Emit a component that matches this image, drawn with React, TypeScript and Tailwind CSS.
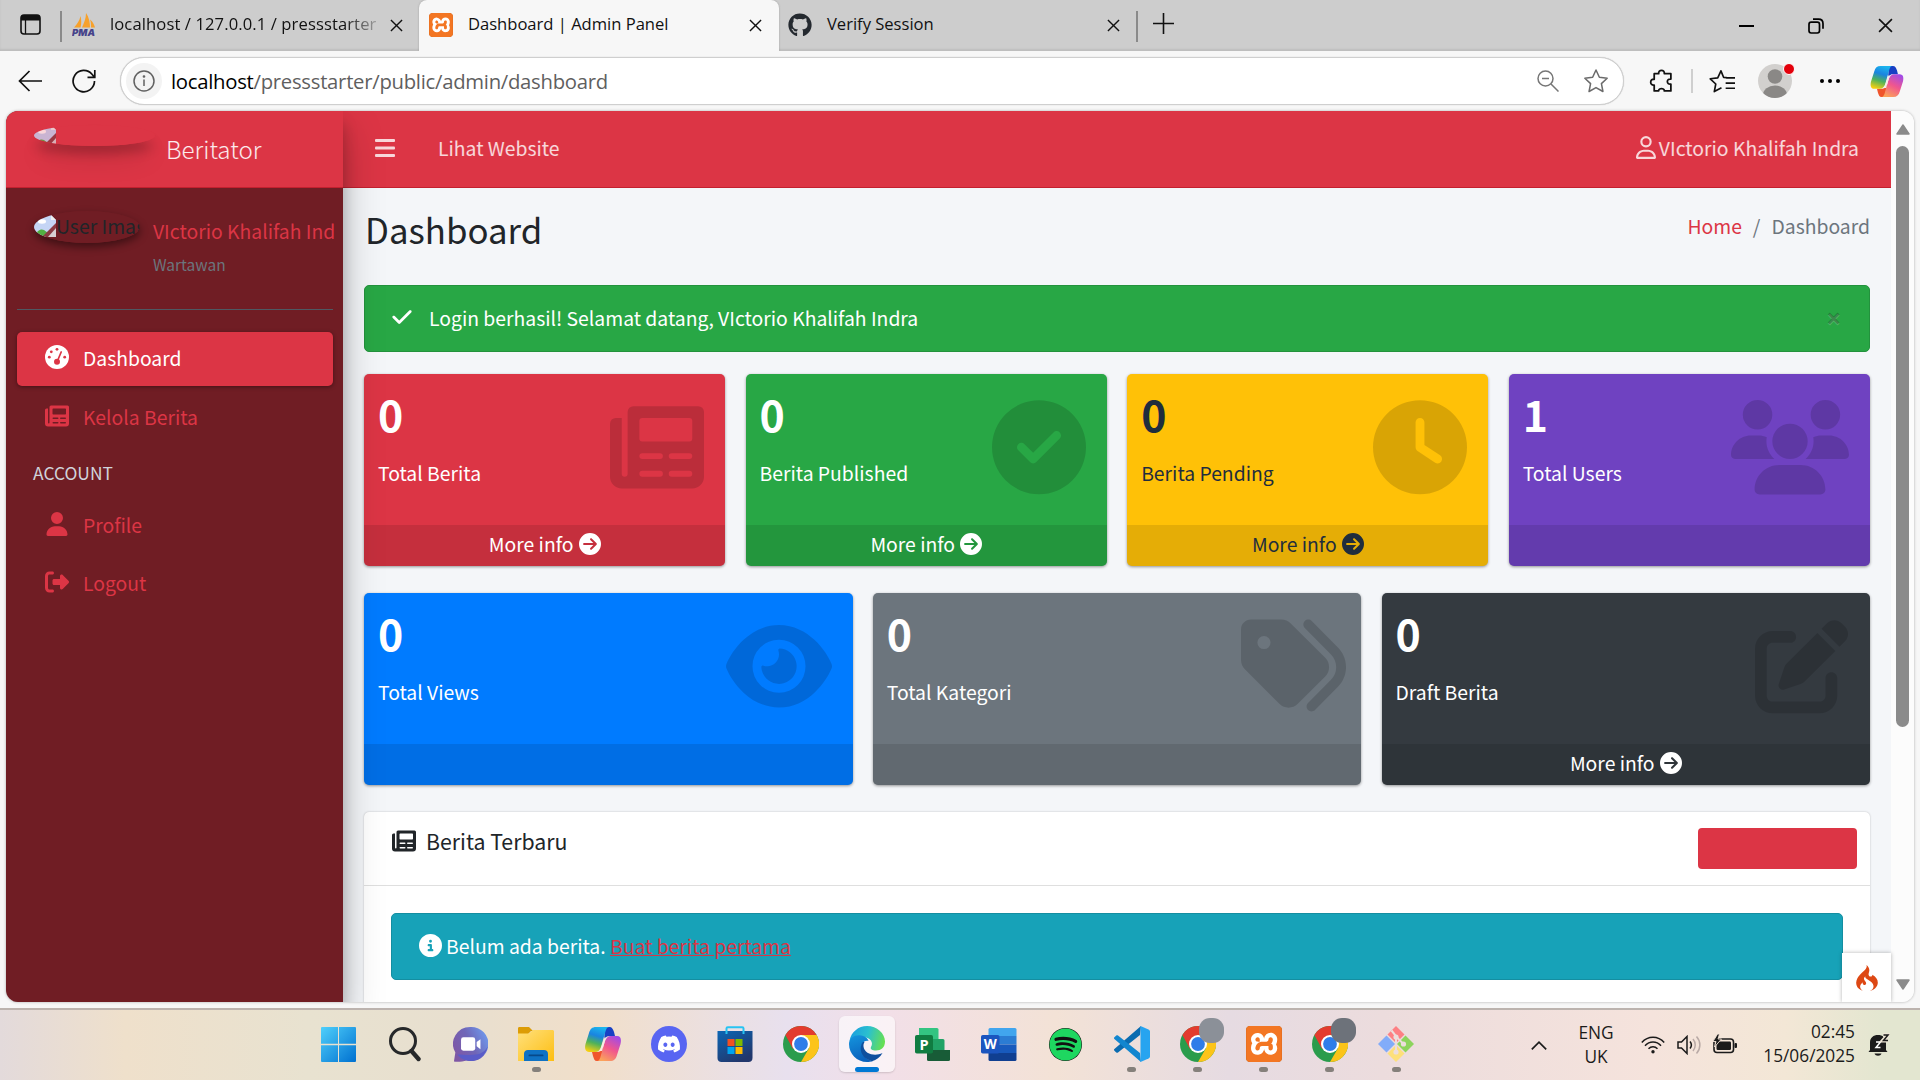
import React from "react";
import {
  FaCircleCheck, FaClock, FaUsers, FaEye, FaTags, FaPenToSquare, FaCircleArrowRight,
  FaCircleInfo, FaCheck, FaBars, FaRegUser, FaUser, FaGithub, FaSpotify, FaDiscord,
} from "react-icons/fa6";
import { SiXampp, SiCodeigniter } from "react-icons/si";

type IconType = React.ComponentType<{ className?: string }>;

const CloseX = ({ className = "" }: { className?: string }) => (
  <svg viewBox="0 0 14 14" className={className} fill="none" stroke="#111" strokeWidth="1.5">
    <path d="M1 1l12 12M13 1L1 13" />
  </svg>
);

const NewspaperIcon: IconType = ({ className }) => (
  <svg viewBox="0 0 512 512" className={className} fill="currentColor" fillRule="evenodd">
    <path d="M128 32H480a32 32 0 0 1 32 32V416a64 64 0 0 1-64 64H64a64 64 0 0 1-64-64V128a32 32 0 0 1 32-32H64V400a16 16 0 0 0 32 0V64a32 32 0 0 1 32-32zM176 96a16 16 0 0 0-16 16v96a16 16 0 0 0 16 16H432a16 16 0 0 0 16-16V112a16 16 0 0 0-16-16zM176 288a16 16 0 0 0 0 32h96a16 16 0 0 0 0-32zM336 288a16 16 0 0 0 0 32h96a16 16 0 0 0 0-32zM176 384a16 16 0 0 0 0 32h96a16 16 0 0 0 0-32zM336 384a16 16 0 0 0 0 32h96a16 16 0 0 0 0-32z" />
  </svg>
);

const PmaIcon = () => (
  <svg viewBox="0 0 24 24" className="h-6 w-6">
    <path d="M2 14.500C5 11 7.500 8 8.500 3c1 4 1 8 0 11.500zM10 14.500c2-5 4-9 4-14.500 3 4 4 10 4 14.500zM19 14.500c0-3 0-5-1-8 3 2 4 5 5 8z" fill="#f7a12b" />
    <text x="0" y="22.700" fontFamily="Inter" fontSize="9.500" fontWeight="900" fontStyle="italic" fill="#46438a" textLength="23">PMA</text>
  </svg>
);

const XamppIcon = ({ className = "" }: { className?: string }) => (
  <div className={`flex items-center justify-center overflow-hidden rounded-[4px] bg-white ring-1 ring-[#b85a1c] ring-inset ${className}`}>
    <SiXampp className="h-full w-full text-[#f37623]" />
  </div>
);

const Copilot = ({ className = "", id }: { className?: string; id: string }) => (
  <svg viewBox="0 0 36 34" className={className}>
    <defs>
      <linearGradient id={id + "a"} x1="0.6" y1="0" x2="0.3" y2="1">
        <stop offset="0" stopColor="#1bb5ee" /><stop offset=".35" stopColor="#1a84e0" /><stop offset=".65" stopColor="#4fb25a" /><stop offset="1" stopColor="#f5cf10" />
      </linearGradient>
      <linearGradient id={id + "b"} x1="0.8" y1="0" x2="0.3" y2="1">
        <stop offset="0" stopColor="#a04be8" /><stop offset=".5" stopColor="#f0568e" /><stop offset="1" stopColor="#fba35a" />
      </linearGradient>
    </defs>
    <path d="M20 0h4.500c2.500 0 3.500 2 4.500 5l1 4h-6c-3 0-4 3-5 6z" fill="#1840c4" />
    <path d="M16 34h-4c-2.500 0-3-2-4-5l-1-4h6c3 0 4-3 5-6z" fill="#f0552c" />
    <path d="M11 0h13c-2 0-3 2-4 6l-4 14c-1 3-3 5-6 5H4c-4 0-4.500-4-3.500-8L4 6c1.200-4 3-6 7-6z" fill={`url(#${id}a)`} />
    <path d="M25 34H12c2 0 3-2 4-6l4-14c1-3 3-5 6-5h6c4 0 4.500 4 3.500 8L32 28c-1.200 4-3 6-7 6z" fill={`url(#${id}b)`} />
    <path d="M19.500 10.500h2.500c-1 1-1.600 2-2 3.500L16.800 24h-3c1.200-.8 1.900-2 2.400-4z" fill="#f5ece6" />
  </svg>
);

const Chrome = ({ className = "" }: { className?: string }) => (
  <svg viewBox="0 0 36 36" className={className}>
    <circle cx="18" cy="18" r="18" fill="#2a9c4c" />
    <path d="M2.400 9A18 18 0 0 1 33.600 9H18l-8 14z" fill="#e33b2e" />
    <path d="M33.600 9A18 18 0 0 1 18 36l7.800-13.500L25.800 13.500 18 9z" fill="#fcc419" />
    <circle cx="18" cy="18" r="9" fill="#fff" />
    <circle cx="18" cy="18" r="6.900" fill="#2f7de9" />
  </svg>
);

const Edge = () => (
  <svg viewBox="0 0 36 36" className="h-9 w-9">
    <defs>
      <linearGradient id="eg1" x1="0" y1="0.3" x2="1" y2="0.5"><stop offset="0" stopColor="#1a9de0" /><stop offset=".5" stopColor="#2bc0cf" /><stop offset="1" stopColor="#66e052" /></linearGradient>
      <linearGradient id="eg2" x1="0" y1="0" x2="0.3" y2="1"><stop offset="0" stopColor="#1595dd" /><stop offset="1" stopColor="#0a62bd" /></linearGradient>
    </defs>
    <path d="M.5 15C2 6 9.500 0 18 0c10 0 18 7.500 18 15.500 0 6-4 9-9 9-4 0-6-1.500-5-3.500 3-5-1-9-7-10C9 10 3 11 .5 15z" fill="url(#eg1)" />
    <path d="M0 18c0-6 6-9.500 12-8.500 4 .5 7 3 7.500 5.500-4-1-7 2-7 7 0 6 4.500 12 11.500 13-2 .8-4 1-6 1C8 36 0 28 0 18z" fill="url(#eg2)" />
    <path d="M14 16c-4 4-3.500 16 9 19.200 4.500-1.200 8-4 10.500-8.200-7 3.500-18 1.500-19-6.500-.2-2 .3-3.300 1-4.500z" fill="#0e4f9e" />
  </svg>
);

const Teams = () => (
  <svg viewBox="0 0 36 38" className="h-[36px] w-[35px]">
    <defs><linearGradient id="tm" x1="0" y1="0.7" x2="1" y2="0.2"><stop offset="0" stopColor="#7f57a5" /><stop offset=".5" stopColor="#6f66b8" /><stop offset="1" stopColor="#6f9cf0" /></linearGradient></defs>
    <path d="M18 1a18 18 0 1 1-4 35.300C10 37.500 5 38 .5 37.500L2 28A18 18 0 0 1 18 1z" fill="url(#tm)" />
    <path d="M4 30a18 18 0 0 0 32-8C30 34 14 30 4 30z" fill="#5a5cc8" />
    <rect x="8" y="12" width="15" height="14" rx="2.500" fill="#fff" />
    <path d="M24.500 17l4-3v10.500l-4-3z" fill="#fff" />
  </svg>
);

const Explorer = () => (
  <svg viewBox="0 0 36 36" className="h-9 w-9">
    <defs><linearGradient id="fx" x1="0" y1="0" x2="1" y2="1"><stop offset="0" stopColor="#ffe07c" /><stop offset="1" stopColor="#fdbe12" /></linearGradient></defs>
    <path d="M0 2.500C0 1.500.6 1 1.500 1H11l4 4h-2l-3 3H0z" fill="#dc9c06" />
    <path d="M0 7.500h11l4-3.500h20l1 1v30H0z" fill="url(#fx)" />
    <path d="M6 35v-7c0-2.500 1.500-4 4-4h16c2.500 0 4 1.500 4 4v7z" fill="#0f72c4" />
    <rect x="10.500" y="28.500" width="15" height="1.800" rx=".9" fill="#07498a" />
  </svg>
);

const Store = () => (
  <svg viewBox="0 0 36 36" className="h-9 w-9">
    <defs><linearGradient id="st" x1="0" y1="0" x2="0.6" y2="1"><stop offset="0" stopColor="#0b66b5" /><stop offset="1" stopColor="#22376c" /></linearGradient></defs>
    <path d="M9.500 8V2.500c0-.8.500-1.300 1.300-1.300h14.400c.8 0 1.300.5 1.300 1.300V8" fill="none" stroke="#28c3f2" strokeWidth="2" />
    <path d="M.5 5h35v27c0 2.500-1.500 4-4 4h-27c-2.500 0-4-1.500-4-4z" fill="url(#st)" />
    <rect x="10.500" y="13" width="7" height="7" fill="#f25022" /><rect x="18.500" y="13" width="7" height="7" fill="#7fba00" />
    <rect x="10.500" y="21" width="7" height="7" fill="#00a4ef" /><rect x="18.500" y="21" width="7" height="7" fill="#ffb900" />
    <path d="M9.500 5V8M26.500 5V8" stroke="#28c3f2" strokeWidth="2" />
  </svg>
);

const Project = () => (
  <svg viewBox="0 0 36 36" className="h-9 w-9">
    <path d="M4 2h18a1.500 1.500 0 0 1 1.500 1.500V13H4z" fill="#33c481" /><path d="M12 13h16a1.500 1.500 0 0 1 1.500 1.500V24H12z" fill="#21a366" />
    <path d="M12 24h23v9.500a1.500 1.500 0 0 1-1.500 1.500h-20A1.500 1.500 0 0 1 12 33.500z" fill="#185c37" />
    <rect x="0" y="9" width="18" height="18.500" rx="1.800" fill="#107c41" />
    <text x="9" y="23.500" textAnchor="middle" fontFamily="Open Sans" fontWeight="700" fontSize="14.500" fill="#fff">P</text>
  </svg>
);

const Word = () => (
  <svg viewBox="0 0 36 36" className="h-9 w-9">
    <path d="M9 2h25a1.500 1.500 0 0 1 1.500 1.500V10h-28V3.500A1.500 1.500 0 0 1 9 2z" fill="#41a5ee" /><path d="M7.500 10h28v8.500h-28z" fill="#2b7cd3" />
    <path d="M7.500 18.500h28V27h-28z" fill="#185abd" /><path d="M7.500 27h28v6.500A1.500 1.500 0 0 1 34 35H9a1.500 1.500 0 0 1-1.500-1.500z" fill="#103f91" />
    <rect x="0" y="9" width="18.500" height="18.500" rx="1.800" fill="#1b55bf" />
    <text x="9.300" y="23.300" textAnchor="middle" fontFamily="Open Sans" fontWeight="700" fontSize="13.500" fill="#fff">W</text>
  </svg>
);

const VsCode = () => (
  <svg viewBox="0 0 36 36" className="h-9 w-9">
    <path d="M27 0l-1 9L4 26.500c-.6.5-1.200.4-1.700 0L.4 24.700c-.6-.6-.5-1.300 0-1.800z" fill="#0b6cb0" />
    <path d="M27 36l-1-9L4 9.500c-.6-.5-1.200-.4-1.700 0L.4 11.300c-.6.6-.5 1.300 0 1.800z" fill="#1286cf" />
    <path d="M26.500 0l8 3.500c1 .5 1.500 1.200 1.500 2.200v24.600c0 1-.5 1.700-1.500 2.200l-8 3.500z" fill="#27a4f0" />
  </svg>
);

const GitBash = () => (
  <svg viewBox="0 0 36 36" className="h-9 w-9">
    <path d="M18 0l8.500 8.500L18 17 9.500 8.500z" fill="#fd8084" /><path d="M8.500 9.500L17 18l-8.500 8.500L0 18z" fill="#82acf9" />
    <path d="M27.500 9.500L36 18l-8.500 8.500L19 18z" fill="#8dd45d" /><path d="M18 19l8.500 8.500L18 36l-8.500-8.500z" fill="#fde07a" />
    <path d="M13.500 4.500L18 10v18M18.500 11l7 7" stroke="#ecdedc" strokeWidth="2" fill="none" />
    <circle cx="18" cy="11" r="2.600" fill="#ecdedc" /><circle cx="25.500" cy="18" r="2.600" fill="#ecdedc" /><circle cx="18" cy="26" r="2.600" fill="#ecdedc" />
  </svg>
);

const ChromeProfile = ({ tone }: { tone: string }) => (
  <div className="relative h-9 w-9">
    <Chrome className="h-9 w-9" />
    <div className={`absolute -top-2 left-[19px] h-[25px] w-[25px] rounded-[11px] ${tone}`} />
  </div>
);

const apps: { el: React.ReactNode; run?: boolean; active?: boolean }[] = [
  { el: (
    <svg viewBox="0 0 35 35" className="h-[35px] w-[35px]">
      <defs><linearGradient id="wn" gradientUnits="userSpaceOnUse" x1="0" y1="0" x2="35" y2="35"><stop offset="0" stopColor="#4fd0fb" /><stop offset="1" stopColor="#0070d0" /></linearGradient></defs>
      <path d="M1 0h16v16.800H0V1a1 1 0 0 1 1-1zM18 0h16a1 1 0 0 1 1 1v15.800H18zM0 18.200h17V35H1a1 1 0 0 1-1-1zM18 18.200h17V34a1 1 0 0 1-1 1H18z" fill="url(#wn)" />
    </svg>) },
  { el: (
    <svg viewBox="0 0 34 36" className="ml-[2px] h-9 w-[34px]" fill="none" stroke="#26282a"><circle cx="15" cy="15" r="12.500" strokeWidth="3" /><path d="M23.500 25l7 8" strokeWidth="4.400" strokeLinecap="round" /></svg>) },
  { el: <Teams /> },
  { el: <Explorer />, run: true },
  { el: <Copilot id="tb" className="h-[34px] w-9" /> },
  { el: <div className="flex h-9 w-9 items-center justify-center rounded-full bg-[#5865f2]"><FaDiscord className="h-[24px] w-[24px] text-white" /></div> },
  { el: <Store /> },
  { el: <Chrome className="h-9 w-9" /> },
  { el: <Edge />, active: true },
  { el: <Project /> },
  { el: <Word /> },
  { el: <div className="h-[33px] w-[33px] rounded-full bg-[#111]"><FaSpotify className="h-[33px] w-[33px] text-[#1ed760]" /></div> },
  { el: <VsCode />, run: true },
  { el: <ChromeProfile tone="bg-[#8b9098]" />, run: true },
  { el: <XamppIcon className="h-9 w-9" />, run: true },
  { el: <ChromeProfile tone="bg-[#6d727a]" />, run: true },
  { el: <GitBash />, run: true },
];

const TabStrip = () => (
  <div className="flex h-[51px] items-stretch bg-[#cdcdcd] text-[16.6px] tracking-[-0.02px] text-[#111] shadow-[inset_0_-2px_2px_#bdbdbd]">
    <div className="flex w-[419px] items-center pt-0 pb-[2px]">
      <svg viewBox="0 0 21 21" className="ml-[20px] h-[21px] w-[21px] flex-none"><rect x="1" y="1" width="19" height="19" rx="3" fill="none" stroke="#111" strokeWidth="1.600" /><path d="M1 4a3 3 0 0 1 3-3h13a3 3 0 0 1 3 3v2.500H1z" fill="#111" /><path d="M5.500 6v14" stroke="#111" strokeWidth="1.300" /></svg>
      <div className="mt-1 ml-[19px] h-[31px] w-[2px] flex-none bg-[#8a8a8a]" />
      <div className="ml-[10px] flex-none"><PmaIcon /></div>
      <div className="ml-[14px] w-[266px] flex-none whitespace-nowrap tracking-[0.1px] [mask-image:linear-gradient(to_right,black_88%,rgba(0,0,0,.25))]">localhost / 127.0.0.1 / pressstarter</div>
      <CloseX className="mt-[1px] ml-[14px] h-[13px] w-[13px] flex-none" />
    </div>
    <div className="flex w-[360px] items-center rounded-t-[8px] bg-[#f7f7f7] pb-[2px] shadow-[0_0_2px_#999]">
      <XamppIcon className="ml-[10px] h-6 w-6 flex-none" />
      <div className="ml-[15px] flex-1 whitespace-nowrap">Dashboard | Admin Panel</div>
      <CloseX className="mt-[1px] mr-[17px] h-[13px] w-[13px]" />
    </div>
    <div className="flex w-[357px] items-center pb-[2px]">
      <FaGithub className="ml-[9px] h-6 w-6 flex-none text-[#24292f]" />
      <div className="ml-[15px] flex-1 whitespace-nowrap">Verify Session</div>
      <CloseX className="mt-[1px] mr-[16px] h-[13px] w-[13px]" />
    </div>
    <div className="mt-[11px] h-[31px] w-[2px] bg-[#8a8a8a]" />
    <svg viewBox="0 0 21 21" className="mt-[13px] ml-[15px] h-[21px] w-[21px]" stroke="#111" strokeWidth="1.600"><path d="M10.500 0v21M0 10.500h21" /></svg>
    <div className="flex flex-1 items-center justify-end gap-[54px] pr-[27px]">
      <div className="h-[2px] w-[15px] bg-black" />
      <svg viewBox="0 0 16 16" className="h-4 w-4" fill="none" stroke="#000" strokeWidth="1.700"><rect x="1" y="4.200" width="10.500" height="10.800" rx="2.200" /><path d="M5 1.200h5.500c2.800 0 4.500 1.700 4.500 4.500v5" /></svg>
      <CloseX className="h-[15px] w-[15px]" />
    </div>
  </div>
);

const star = "M12 1.800l3.100 6.700 7.200.9-5.300 5 1.400 7.300L12 18.100l-6.400 3.600L7 14.400 1.700 9.400l7.200-.9z";

const Toolbar = () => (
  <div className="flex h-[60px] items-center bg-[#f7f7f7]">
    <svg viewBox="0 0 24 22" className="ml-[18px] h-[22px] w-6" fill="none" stroke="#111" strokeWidth="1.700"><path d="M24 11H1.500M11.500 1l-10 10 10 10" /></svg>
    <svg viewBox="0 0 24 24" className="ml-[30px] h-6 w-6" fill="none" stroke="#111" strokeWidth="1.700"><path d="M22.500 12A10.700 10.700 0 1 1 20 5.200L22.300 8M22.800 1v7.300h-7.300" /></svg>
    <div className="ml-[24px] flex h-[48px] w-[1504px] items-center rounded-full border border-[#cfcfcf] bg-white shadow-[0_0_1px_#bbb]">
      <div className="ml-[5px] flex h-9 w-9 items-center justify-center rounded-full bg-[#f3f3f3]">
        <svg viewBox="0 0 22 22" className="h-[22px] w-[22px]" fill="none" stroke="#616161" strokeWidth="1.500"><circle cx="11" cy="11" r="10" /><path d="M11 9.500V16" /><circle cx="11" cy="6.500" r=".6" fill="#616161" /></svg>
      </div>
      <div className="ml-[9px] flex-1 text-[20.3px] tracking-[-0.27px] whitespace-nowrap text-[#5f5f5f]"><span className="text-black">localhost</span>/pressstarter/public/admin/dashboard</div>
      <svg viewBox="0 0 22 22" className="mr-[24px] h-[22px] w-[22px]" fill="none" stroke="#767676" strokeWidth="1.500"><circle cx="8.500" cy="8.500" r="7.500" /><path d="M14 14l7.500 7.500M5 8.500h7" /></svg>
      <svg viewBox="0 0 24 24" className="mr-[14px] h-[26px] w-[26px]" fill="none" stroke="#6b6b6b" strokeWidth="1.400" strokeLinejoin="round"><path d={star} /></svg>
    </div>
    <svg viewBox="0 0 24 24" className="ml-[25px] h-[25px] w-[25px]" fill="none" stroke="#111" strokeWidth="1.700" strokeLinejoin="round"><path d="M5 4.500h4.300c-.6-4.200 6-4.200 5.400 0H21v5.200c-4.500-.8-4.500 5.600 0 4.800V21h-6.300c.2-3-5.600-3-5.400 0H5v-5.500c-4.500.8-4.500-6.400 0-5.600z" /></svg>
    <div className="ml-[17px] h-[24px] w-[2px] bg-[#cfcfcf]" />
    <svg viewBox="0 0 25 24" className="ml-[16px] h-[25px] w-[26px]" fill="none" stroke="#111" strokeWidth="1.600" strokeLinejoin="round"><path d="M17 8.300l-2.900-.2L11.500 1.800 8.400 8.500l-7.200.9 5.300 5-1.400 7.300L12 18M16.500 8.500H25M16 13.500h9M16 18.500h9" /></svg>
    <div className="relative ml-[23px]">
      <svg viewBox="0 0 34 34" className="h-[34px] w-[34px]"><defs><clipPath id="av"><circle cx="17" cy="17" r="17" /></clipPath></defs><g clipPath="url(#av)"><rect width="34" height="34" fill="#d2d0ce" /><circle cx="17" cy="12.500" r="7.300" fill="#8a8886" /><ellipse cx="17" cy="31" rx="12" ry="9.500" fill="#8a8886" /></g></svg>
      <div className="absolute -top-[1px] left-[25px] h-[12px] w-[12px] rounded-full border border-white bg-[#e3000b]" />
    </div>
    <div className="ml-[28px] flex gap-[4px]"><i className="h-1 w-1 rounded-full bg-black" /><i className="h-1 w-1 rounded-full bg-black" /><i className="h-1 w-1 rounded-full bg-black" /></div>
    <Copilot id="tl" className="ml-[30px] h-[31px] w-[34px]" />
  </div>
);

const BrokenImage = () => (
  <svg viewBox="0 0 22 22" className="h-[22px] w-[22px] flex-none">
    <path d="M0 0h17l5 5v17H0z" fill="#c5d5f5" /><path d="M17 0l5 5h-5z" fill="#eee" />
    <ellipse cx="8" cy="6.500" rx="4" ry="2.200" fill="#fff" />
    <path d="M0 22c3-7 7-8.500 10-7l4 3-4 4z" fill="#52b043" /><path d="M22 8L8 22h14z" fill="#8a3a42" /><path d="M22 13l-8 9h8z" fill="#d8cfd2" />
  </svg>
);

const LogoutIcon: IconType = ({ className }) => (
  <svg viewBox="0 0 512 512" className={className} fill="currentColor"><path d="M377.900 105.900L500.700 228.700c7.200 7.200 11.300 17.100 11.300 27.300s-4.100 20.100-11.300 27.300L377.900 406.100c-6.400 6.400-15 9.900-24 9.900c-18.700 0-33.900-15.200-33.900-33.900l0-62.100-128 0c-17.700 0-32-14.300-32-32l0-64c0-17.700 14.300-32 32-32l128 0 0-62.100c0-18.700 15.200-33.900 33.900-33.900c9 0 17.600 3.600 24 9.900zM160 96L96 96c-17.700 0-32 14.300-32 32l0 256c0 17.700 14.300 32 32 32l64 0c17.700 0 32 14.300 32 32s-14.300 32-32 32l-64 0c-53 0-96-43-96-96L0 128C0 75 43 32 96 32l64 0c17.700 0 32 14.300 32 32s-14.300 32-32 32z" /></svg>
);

const GaugeIcon: IconType = ({ className }) => (
  <svg viewBox="0 0 24 24" className={className}><circle cx="12" cy="12" r="12" fill="#fff" /><g fill="#dc3545"><circle cx="12" cy="4.300" r="1.400" /><circle cx="6.300" cy="6.800" r="1.400" /><circle cx="4.300" cy="12.200" r="1.400" /><circle cx="19.700" cy="12.200" r="1.400" /><circle cx="12" cy="16.800" r="3" /></g><path d="M12.200 16.500l4-9.500" stroke="#dc3545" strokeWidth="1.700" strokeLinecap="round" /></svg>
);

const NavItem = ({ icon: Icon, label, active }: { icon: IconType; label: string; active?: boolean }) => (
  <div className={`flex h-[54px] items-center rounded-[5px] pb-[2px] pl-[27px] ${active ? "bg-[#dc3545] text-white shadow-[0_1px_4px_rgba(0,0,0,.4)]" : "text-[#dc3545]"}`}>
    <div className="flex w-[25px] justify-center pb-[3px]"><Icon className="h-[24px] w-[24px]" /></div>
    <span className="ml-[14px]">{label}</span>
  </div>
);

const Sidebar = () => (
  <aside className="z-10 w-[337px] flex-none bg-[#701d24] shadow-[0_19px_38px_rgba(0,0,0,.25),0_13px_14px_rgba(0,0,0,.22)]">
    <div className="flex h-[77px] border-b border-[#c3202f] bg-[#dc3545]">
      <div className="mt-[14px] ml-[28px] flex h-[21px] w-[121px] items-center overflow-visible rounded-[50%] shadow-[0_10px_12px_-2px_rgba(0,0,0,.24),0_18px_24px_rgba(0,0,0,.07)]">
        <div className="flex h-full w-full items-center overflow-hidden rounded-[50%] bg-[#dc3545]"><div className="opacity-80"><BrokenImage /></div></div>
      </div>
      <div className="mt-[20px] ml-[11px] text-[24.2px] leading-[36px] font-light text-white/90">Beritator</div>
    </div>
    <div className="pr-[10px] pl-[11px]">
      <div className="flex h-[122px] border-b border-[#4f5962] pt-[23px] pl-[17px]">
        <div className="h-[32px] w-[106px] flex-none rounded-[50%] shadow-[0_4px_8px_rgba(0,0,0,.45)]">
          <div className="flex h-full w-full items-center overflow-hidden rounded-[50%] bg-[#701d24] pb-[2px]"><BrokenImage /><span className="whitespace-nowrap text-[#212529]">User Imag</span></div>
        </div>
        <div className="ml-[13px] flex-1 whitespace-nowrap">
          <div className="mt-[4px] leading-[32px] text-[#dc3545]">VIctorio Khalifah Ind</div>
          <div className="text-[15.500px] leading-[34px] text-[#6c757d]">Wartawan</div>
        </div>
      </div>
      <nav className="mt-[22px] flex flex-col">
        <NavItem icon={GaugeIcon} label="Dashboard" active />
        <div className="h-[5px]" />
        <NavItem icon={NewspaperIcon} label="Kelola Berita" />
        <div className="pt-[15px] pb-[13px] pl-[16px] text-[17.400px] leading-[26px] text-[#d0d4db]">ACCOUNT</div>
        <NavItem icon={FaUser} label="Profile" />
        <div className="h-[4px]" />
        <NavItem icon={LogoutIcon} label="Logout" />
      </nav>
    </div>
  </aside>
);

type CardProps = { n: string; label: string; icon: IconType; bg: string; iw?: string; more?: boolean };

const SmallBox = ({ n, label, icon: Icon, bg, iw = "mt-[26px] mr-[21px] h-[94.5px] w-[94px]", more }: CardProps) => (
  <div className={`flex h-[192px] flex-1 flex-col overflow-hidden rounded-[5px] shadow-[0_1px_3px_rgba(0,0,0,.4)] ${bg}`}>
    <div className="flex flex-1 justify-between pl-[14px]">
      <div>
        <div className="mt-[13px] text-[42.800px] leading-[52px] font-bold">{n}</div>
        <div className="mt-[18px] leading-[32px]">{label}</div>
      </div>
      <Icon className={`text-black/15 ${iw}`} />
    </div>
    <div className="flex h-[41px] items-center justify-center bg-black/10 pb-[3px]">
      {more && (<><span>More info</span><FaCircleArrowRight className="ml-[5px] h-[22px] w-[22px]" /></>)}
    </div>
  </div>
);

const Main = () => (
  <div className="flex min-w-0 flex-1 flex-col bg-[#f4f6f9]">
    <header className="flex h-[77px] flex-none items-center border-b border-[#c3202f] bg-[#dc3545] pr-[32px] pb-[2px] pl-[32px] text-white/80">
      <svg viewBox="0 0 20 20" className="h-[20px] w-[20px]" fill="currentColor"><rect y="1" width="20" height="3" rx="1" /><rect y="8.500" width="20" height="3" rx="1" /><rect y="16" width="20" height="3" rx="1" /></svg>
      <span className="ml-[43px] flex-1">Lihat Website</span>
      <FaRegUser className="mb-[2px] h-[23px] w-[20px]" />
      <span className="ml-[3px]">VIctorio Khalifah Indra</span>
    </header>
    <div className="flex flex-col px-[21px]">
      <div className="flex h-[97px] justify-between">
        <h1 className="mt-[17px] ml-[1px] text-[34.800px] leading-[48px] text-[#212529]">Dashboard</h1>
        <div className="mt-[21px] flex gap-[11px] leading-[34px]"><span className="text-[#dc3545]">Home</span><span className="text-[#6c757d]">/</span><span className="text-[#6c757d]">Dashboard</span></div>
      </div>
      <div className="flex h-[67px] items-center rounded-[5px] border border-[#23923d] bg-[#28a745] pr-[28px] pb-[2px] pl-[27px] text-white">
        <FaCheck className="mb-[1px] h-[22px] w-[20px]" /><span className="ml-[17px] flex-1">Login berhasil! Selamat datang, VIctorio Khalifah Indra</span>
        <span className="pt-[1px] font-['Open_Sans'] text-[26px] leading-none font-bold text-black/25 [text-shadow:0_1px_0_rgba(255,255,255,.2)]">×</span>
      </div>
      <div className="mt-[22px] flex gap-[20.250px]">
        <SmallBox n="0" label="Total Berita" icon={NewspaperIcon} bg="bg-[#dc3545] text-white" more />
        <SmallBox n="0" label="Berita Published" icon={FaCircleCheck} bg="bg-[#28a745] text-white" more />
        <SmallBox n="0" label="Berita Pending" icon={FaClock} bg="bg-[#ffc107] text-[#1f2d3d]" more />
        <SmallBox n="1" label="Total Users" icon={FaUsers} bg="bg-[#6f42c1] text-white" iw="mt-[26px] mr-[21px] h-[94.5px] w-[118px]" />
      </div>
      <div className="mt-[27px] flex gap-[20.250px]">
        <SmallBox n="0" label="Total Views" icon={FaEye} bg="bg-[#007bff] text-white" iw="mt-[26px] mr-[21px] h-[94.5px] w-[106px]" />
        <SmallBox n="0" label="Total Kategori" icon={FaTags} bg="bg-[#6c757d] text-white" iw="mt-[20px] mr-[15px] h-[105px] w-[105px]" />
        <SmallBox n="0" label="Draft Berita" icon={FaPenToSquare} bg="bg-[#343a40] text-white" more />
      </div>
      <div className="mt-[27px] h-[240px] rounded-t-[5px] bg-white shadow-[0_0_2px_rgba(0,0,0,.25)]">
        <div className="flex h-[74px] justify-between border-b border-[#dfdfdf] pr-[13px] pl-[28px]">
          <div className="flex items-start text-[21.300px] leading-[32px] text-[#212529]"><NewspaperIcon className="mt-[17px] h-[24px] w-[24px]" /><span className="mt-[13px] ml-[10px]">Berita Terbaru</span></div>
          <div className="mt-[16px] h-[41px] w-[159px] rounded-[4px] bg-[#dc3545]" />
        </div>
        <div className="mx-[27px] mt-[27px] flex h-[67px] items-center rounded-[5px] border border-[#148ea1] bg-[#17a2b8] pb-[2px] pl-[27px] text-white">
          <FaCircleInfo className="mb-[1px] h-[23px] w-[23px]" /><span className="ml-[4px]">Belum ada berita. <span className="text-[#dc3545] underline">Buat berita pertama</span></span>
        </div>
      </div>
    </div>
  </div>
);

const Scrollbar = () => (
  <div className="flex w-[23px] flex-none flex-col items-center bg-[#fcfcfc]">
    <svg viewBox="0 0 14 11" className="mt-[13px] h-[11px] w-[14px]"><path d="M7 1L13 10H1z" fill="#8b8b8b" stroke="#8b8b8b" strokeLinejoin="round" strokeWidth="1.500" /></svg>
    <div className="mt-[11px] h-[581px] w-[13px] rounded-full bg-[#8b8b8b]" />
    <svg viewBox="0 0 14 11" className="mt-[252px] h-[11px] w-[14px]"><path d="M7 10L13 1H1z" fill="#8b8b8b" stroke="#8b8b8b" strokeLinejoin="round" strokeWidth="1.500" /></svg>
  </div>
);

const Taskbar = () => (
  <div className="flex h-[72px] border-t-2 border-[#bcb3ae] bg-[linear-gradient(90deg,#e3dadb_0%,#efe0cb_6.5%,#e8e2d0_16%,#e8dfcf_24%,#f1dfca_31%,#e8e0ee_41%,#f2dfe8_46%,#f3e2d6_55%,#e6dbe2_64%,#ecdcdd_72%,#f5e3dc_86%,#f3e7d6_93%,#e3e6d0_98%)] text-[#1b1b1b]">
    <div className="ml-[305px] flex w-[1124px]">
      {apps.map((a, i) => (
        <div key={i} className="flex flex-1 justify-center">
          <div className={`relative mt-[6px] flex h-[56px] w-[56px] items-center justify-center rounded-[6px] ${a.active ? "bg-white/60 shadow-[0_1px_2px_rgba(0,0,0,.15)]" : ""}`}>
            {a.el}
            {a.active && <div className="absolute bottom-0 h-[5px] w-[24px] rounded-full bg-[#0078d4]" />}
            {a.run && <div className="absolute bottom-0 h-[5px] w-[9px] rounded-full bg-[#85807b]" />}
          </div>
        </div>
      ))}
    </div>
    <div className="flex flex-1 items-center text-[17.300px] leading-[24px]">
      <svg viewBox="0 0 16 9" className="ml-[102px] h-[9px] w-4" fill="none" stroke="#1b1b1b" strokeWidth="1.700"><path d="M.8 8.300L8 1.200l7.200 7.100" /></svg>
      <div className="ml-[30px] w-[38px] pb-px text-center">ENG<br />UK</div>
      <svg viewBox="0 0 24 18" className="ml-[26px] h-[18px] w-[24px]" fill="none" stroke="#1b1b1b" strokeWidth="1.500"><path d="M.8 6.500C7-.5 17-.5 23.200 6.500M4 9.700c4.500-4.800 11.500-4.800 16 0M7.500 12.700c2.600-2.600 6.400-2.600 9 0" /><circle cx="12" cy="15.800" r="1.700" fill="#1b1b1b" stroke="none" /></svg>
      <svg viewBox="0 0 24 20" className="ml-[12px] h-5 w-6" fill="none" strokeWidth="1.500"><path d="M1 7h3.500L10 1.500v17L4.500 13H1zM13 6.500c1.600 2 1.600 5 0 7" stroke="#1b1b1b" /><path d="M16 4c3 3.500 3 8.500 0 12M19.500 1.500c4.500 5 4.500 12 0 17" stroke="#b9aaa6" /></svg>
      <svg viewBox="0 0 24 20" className="mb-[3px] ml-[12px] h-5 w-6"><rect x="1" y="5" width="19.500" height="13.500" rx="3" fill="none" stroke="#1b1b1b" strokeWidth="1.600" /><rect x="3.500" y="7.500" width="14.500" height="8.500" rx="1.200" fill="#1b1b1b" /><rect x="21.500" y="9" width="2.500" height="5" rx="1" fill="#1b1b1b" /><path d="M4.500 0L0 7.500h3L1.500 13 8.500 5H5l1.500-5z" fill="#1b1b1b" stroke="#f4e5d9" strokeWidth=".9" /></svg>
      <div className="ml-auto pb-[3px] text-right">02:45<br />15/06/2025</div>
      <svg viewBox="0 0 22 24" className="mr-[30px] ml-[13px] h-6 w-[22px]"><path d="M2 17V9.500C2 4.500 5.500 2 10 2s8 2.500 8 7.500V17l1.500 2H.5z" fill="#1b1b1b" /><path d="M6.500 20.500h7c-1 3-6 3-7 0z" fill="#1b1b1b" /><path d="M8 9h4.500L8 14.500h4.500" fill="none" stroke="#fff" strokeWidth="1.500" /><path d="M15 2h5l-5 5.500h5" fill="none" stroke="#eee6d6" strokeWidth="4" /><path d="M15.500 2H20l-4.500 5.500H20" fill="none" stroke="#1b1b1b" strokeWidth="1.500" /></svg>
    </div>
  </div>
);

export default function App() {
  return (
    <div className="flex h-[1080px] w-[1920px] flex-col overflow-hidden bg-[#f7f7f7] font-['Open_Sans',sans-serif]">
      <TabStrip />
      <Toolbar />
      <div className="mr-[6px] ml-[6px] h-[891px] rounded-[12px] shadow-[0_0_3px_rgba(0,0,0,.3)]">
        <div className="relative flex h-full overflow-hidden rounded-[12px] font-['Noto_Sans_CJK_SC',sans-serif] text-[19.350px] leading-[32px]">
          <Sidebar />
          <Main />
          <Scrollbar />
          <div className="absolute right-[23px] bottom-0 z-20 flex h-[49px] w-[49px] items-center justify-center bg-white shadow-[0_0_4px_rgba(0,0,0,.3)]"><SiCodeigniter className="h-[26px] w-[26px] text-[#dd4814]" /></div>
        </div>
      </div>
      <div className="h-[6px]" />
      <Taskbar />
    </div>
  );
}
